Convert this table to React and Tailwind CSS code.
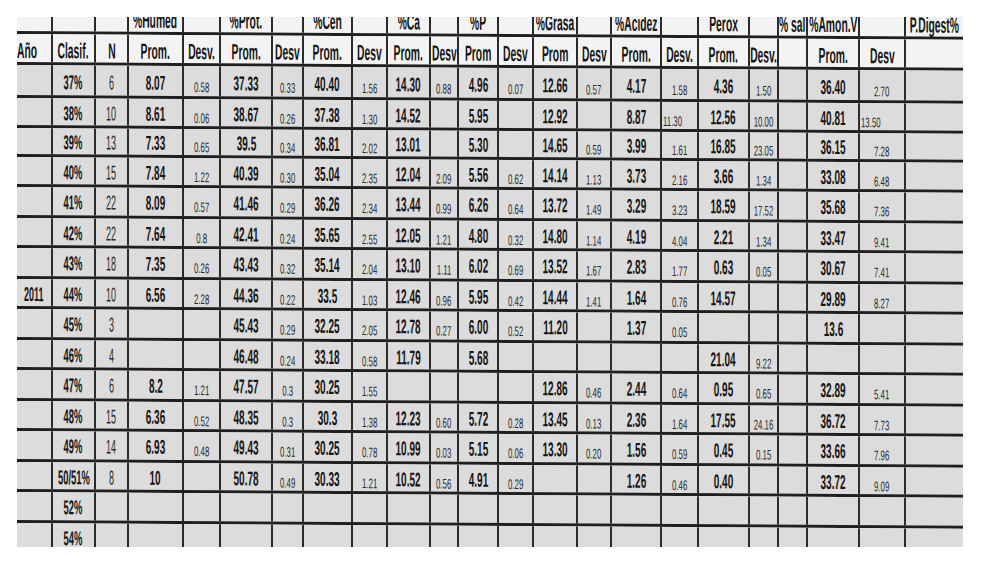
const GRID =
  "grid grid-cols-[34px_43px_33px_55px_37px_52px_31px_49px_35px_43px_28px_40px_35px_44px_34px_50px_37px_51px_29px_29px_52px_46px_58px]";

const KINDS = ["Y", "C", "N", "P", "D", "P", "D", "P", "D", "P", "D", "P", "D", "P", "D", "P", "D", "P", "D", "S", "P", "D", "X"];

const head1 = ["", "", "", "%Humed", "", "%Prot.", "", "%Cen", "", "%Ca", "", "%P", "", "%Grasa", "", "%Acidez", "", "Perox", "", "% sal", "%Amon.V", "", "P.Digest%"];
const head2 = ["Año", "Clasif.", "N", "Prom.", "Desv.", "Prom.", "Desv", "Prom.", "Desv", "Prom.", "Desv", "Prom", "Desv", "Prom", "Desv", "Prom.", "Desv.", "Prom.", "Desv.", "", "Prom.", "Desv", ""];

// year, clasif, N, then prom/desv pairs ... ("<" = left aligned)
const rows = [
  { h: "h-[33px]", c: ["", "37%", "6", "8.07", "0.58", "37.33", "0.33", "40.40", "1.56", "14.30", "0.88", "4.96", "0.07", "12.66", "0.57", "4.17", "1.58", "4.36", "1.50", "", "36.40", "2.70", ""] },
  { h: "h-[30px]", c: ["", "38%", "10", "8.61", "0.06", "38.67", "0.26", "37.38", "1.30", "14.52", "", "5.95", "", "12.92", "", "8.87", "<11.30", "12.56", "10.00", "", "40.81", "<13.50", ""] },
  { h: "h-[28.5px]", c: ["", "39%", "13", "7.33", "0.65", "39.5", "0.34", "36.81", "2.02", "13.01", "", "5.30", "", "14.65", "0.59", "3.99", "1.61", "16.85", "23.05", "", "36.15", "7.28", ""] },
  { h: "h-[30.5px]", c: ["", "40%", "15", "7.84", "1.22", "40.39", "0.30", "35.04", "2.35", "12.04", "2.09", "5.56", "0.62", "14.14", "1.13", "3.73", "2.16", "3.66", "1.34", "", "33.08", "6.48", ""] },
  { h: "h-[30.5px]", c: ["", "41%", "22", "8.09", "0.57", "41.46", "0.29", "36.26", "2.34", "13.44", "0.99", "6.26", "0.64", "13.72", "1.49", "3.29", "3.23", "18.59", "17.52", "", "35.68", "7.36", ""] },
  { h: "h-[30.5px]", c: ["", "42%", "22", "7.64", "0.8", "42.41", "0.24", "35.65", "2.55", "12.05", "1.21", "4.80", "0.32", "14.80", "1.14", "4.19", "4.04", "2.21", "1.34", "", "33.47", "9.41", ""] },
  { h: "h-[30.5px]", c: ["", "43%", "18", "7.35", "0.26", "43.43", "0.32", "35.14", "2.04", "13.10", "1.11", "6.02", "0.69", "13.52", "1.67", "2.83", "1.77", "0.63", "0.05", "", "30.67", "7.41", ""] },
  { h: "h-[30.5px]", c: ["2011", "44%", "10", "6.56", "2.28", "44.36", "0.22", "33.5", "1.03", "12.46", "0.96", "5.95", "0.42", "14.44", "1.41", "1.64", "0.76", "14.57", "", "", "29.89", "8.27", ""] },
  { h: "h-[30.5px]", c: ["", "45%", "3", "", "", "45.43", "0.29", "32.25", "2.05", "12.78", "0.27", "6.00", "0.52", "11.20", "", "1.37", "0.05", "", "", "", "13.6", "", ""] },
  { h: "h-[30.5px]", c: ["", "46%", "4", "", "", "46.48", "0.24", "33.18", "0.58", "11.79", "", "5.68", "", "", "", "", "", "21.04", "9.22", "", "", "", ""] },
  { h: "h-[30.5px]", c: ["", "47%", "6", "8.2", "1.21", "47.57", "0.3", "30.25", "1.55", "", "", "", "", "12.86", "0.46", "2.44", "0.64", "0.95", "0.65", "", "32.89", "5.41", ""] },
  { h: "h-[30.5px]", c: ["", "48%", "15", "6.36", "0.52", "48.35", "0.3", "30.3", "1.38", "12.23", "0.60", "5.72", "0.28", "13.45", "0.13", "2.36", "1.64", "17.55", "24.16", "", "36.72", "7.73", ""] },
  { h: "h-[30.5px]", c: ["", "49%", "14", "6.93", "0.48", "49.43", "0.31", "30.25", "0.78", "10.99", "0.03", "5.15", "0.06", "13.30", "0.20", "1.56", "0.59", "0.45", "0.15", "", "33.66", "7.96", ""] },
  { h: "h-[30.5px]", c: ["", "50/51%", "8", "10", "", "50.78", "0.49", "30.33", "1.21", "10.52", "0.56", "4.91", "0.29", "", "", "1.26", "0.46", "0.40", "", "", "33.72", "9.09", ""] },
  { h: "h-[30.5px]", c: ["", "52%", "", "", "", "", "", "", "", "", "", "", "", "", "", "", "", "", "", "", "", "", ""] },
  { h: "h-[30.5px]", c: ["", "54%", "", "", "", "", "", "", "", "", "", "", "", "", "", "", "", "", "", "", "", "", ""] },
];

const SPAN = {
  Y: "font-bold text-[20px] scale-x-[0.45] text-[#151515]",
  C: "font-bold text-[20px] scale-x-[0.47] text-[#151515]",
  N: "text-[20px] scale-x-[0.45] text-[#2a2a2a]",
  P: "font-bold text-[20px] scale-x-[0.5] text-[#151515]",
  D: "text-[14px] scale-x-[0.56] text-[#2a2a2a]",
  S: "",
  X: "",
};

const PAD = { Y: "pt-[3px]", C: "pt-[3px]", N: "pt-[3px]", P: "pt-[3px]", D: "pt-[11px]", S: "", X: "" };

function DataCell({ v, kind, i }) {
  const left = v.startsWith("<");
  const text = left ? v.slice(1) : v;
  return (
    <div
      className={`flex items-center ${left ? "justify-start pl-[1px]" : "justify-center"} ${PAD[kind]} ${
        i === 0 ? "" : "border-l-2 border-[#2b2b2b]"
      }`}
    >
      {text && (
        <span className={`inline-block whitespace-nowrap leading-none ${left ? "origin-left" : ""} ${SPAN[kind]}`}>
          {text}
        </span>
      )}
    </div>
  );
}

function HeadCell({ v, i, top }) {
  return (
    <div
      className={`flex ${top ? "items-end" : "items-center pt-[5px]"} ${i === 0 ? "justify-start" : "justify-center"} ${
        i === 0 ? "" : "border-l-2 border-[#2b2b2b]"
      }`}
    >
      {v && (
        <span
          className={`inline-block whitespace-nowrap leading-none font-bold text-[22px] text-[#151515] scale-x-[0.47] ${
            i === 0 ? "origin-left" : ""
          }`}
        >
          {v}
        </span>
      )}
    </div>
  );
}

export default function App() {
  return (
    <div className="w-[983px] h-[561px] bg-white pt-[17px] pl-[17px] font-['Liberation_Sans',Arial,sans-serif]">
      <div className="w-[946px] h-[530px] overflow-hidden">
        <div className="-mt-[10px] w-[946px] origin-top-left skew-y-[0.35deg]">
          <div className={`${GRID} h-[27px] bg-[#f3f3f3] border-b-[3px] border-[#1f1f1f]`}>
            {head1.map((v, i) => (
              <HeadCell key={i} v={v} i={i} top />
            ))}
          </div>
          <div className={`${GRID} h-[31px] bg-[#f3f3f3] border-b-[3px] border-[#1f1f1f]`}>
            {head2.map((v, i) => (
              <HeadCell key={i} v={v} i={i} />
            ))}
          </div>
          {rows.map((r, ri) => (
            <div key={ri} className={`${GRID} ${r.h} bg-[#dcdcdc] border-b-[3px] border-[#1f1f1f]`}>
              {r.c.map((v, i) => (
                <DataCell key={i} v={v} kind={KINDS[i]} i={i} />
              ))}
            </div>
          ))}
        </div>
      </div>
    </div>
  );
}
